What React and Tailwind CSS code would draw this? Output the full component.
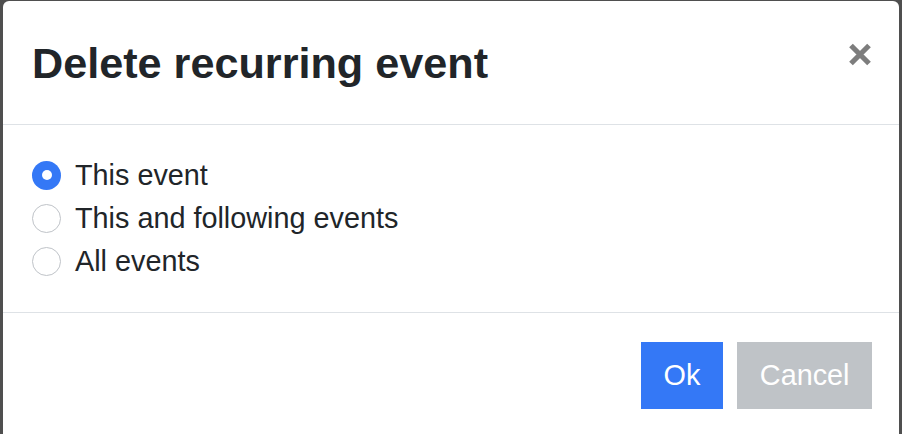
import React, { useState } from "react";

const options = ["This event", "This and following events", "All events"];

function Radio({ checked }) {
  return checked ? (
    <span className="flex h-[29px] w-[29px] shrink-0 items-center justify-center rounded-full bg-[#3478f6]">
      <span className="h-[10px] w-[10px] rounded-full bg-white" />
    </span>
  ) : (
    <span className="h-[29px] w-[29px] shrink-0 rounded-full border border-[#bfc3c8] bg-white" />
  );
}

export default function App() {
  const [sel, setSel] = useState(0);
  return (
    <div
      className="h-[434px] w-[902px] overflow-hidden bg-[#4f4f4f] pl-[3px] pr-[3px] pt-[1px]"
      style={{ fontFamily: '"Liberation Sans", Arial, sans-serif' }}
    >
      <div className="h-[460px] rounded-t-[6px] bg-white text-[#212529]">
        <div className="flex items-start justify-between border-b border-[#dee2e6] pb-[34px] pl-[29px] pr-[27px] pt-[37px]">
          <h4 className="text-[43.2px] font-bold leading-[51.84px]">Delete recurring event</h4>
          <button className="mt-[5px] flex h-[23px] w-[24px] items-center justify-center">
            <svg width="24" height="23" viewBox="0 0 24 23">
              <path d="M3 2.5 L21 20.5 M21 2.5 L3 20.5" stroke="#7d7d7d" strokeWidth="5.2" strokeLinecap="butt" />
            </svg>
          </button>
        </div>
        <div className="flex flex-col border-b border-[#dee2e6] px-[29px] py-[28.8px]">
          {options.map((o, i) => (
            <label
              key={o}
              className="flex h-[43.2px] cursor-pointer items-center gap-[14px] text-[28.8px] leading-[43.2px]"
              onClick={() => setSel(i)}
            >
              <Radio checked={sel === i} />
              <span>{o}</span>
            </label>
          ))}
        </div>
        <div className="flex justify-end gap-[14px] pr-[27px] pt-[29px]">
          <button className="h-[67px] bg-[#3478f6] px-[23px] text-[28.8px] leading-[43.2px] text-white">Ok</button>
          <button className="h-[67px] bg-[#bfc3c7] px-[22.5px] text-[28.8px] leading-[43.2px] text-white">Cancel</button>
        </div>
      </div>
    </div>
  );
}
